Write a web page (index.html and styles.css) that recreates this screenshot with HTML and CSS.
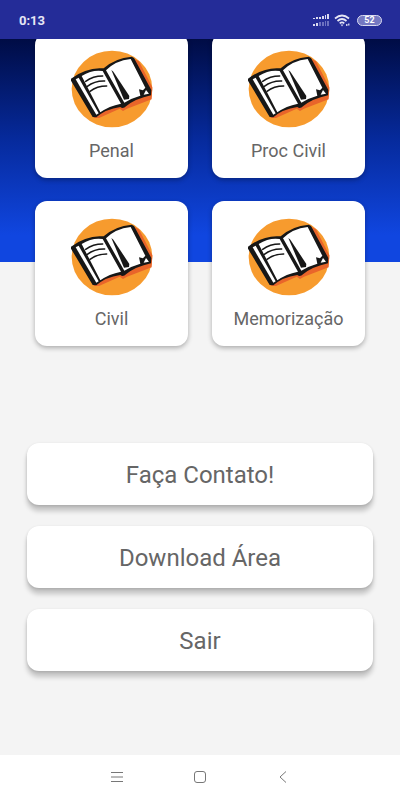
FILE: index.html
```html
<!DOCTYPE html>
<html lang="pt-BR">
<head>
    <meta charset="UTF-8">
    <meta name="viewport" content="width=device-width, initial-scale=1.0">
    <title>Menu</title>
    <link rel="stylesheet" href="styles.css">
</head>
<body>
    <svg class="sprite" aria-hidden="true">
        <symbol id="book" viewBox="32 30 246 234">
            <ellipse cx="155" cy="147" rx="121" ry="115" fill="#f79b2e"/>
            <path d="M218 54 L236 64 L276 142 L274 178 L200 206 L188 213 L178 206 L116 234 L100 234 Z" fill="#e9652a"/>
            <path d="M32 116 Q80 80 130 85 Q164 54 214 50 L221 54 L273 150 L272 166 Q226 176 198 198 Q188 208 180 201 Q136 207 108 232 L97 231 L32 122 Z" fill="#171717"/>
            <path d="M46 118 L55 113 L115 220 L108 224 Z" fill="#fff"/>
            <path d="M64 108 Q96 88 127 93 L182 191 Q146 198 120 217 Z" fill="#fff"/>
            <path d="M137 91 Q165 62 211 57 L255 143 L248 151 L236 148 L240 167 Q212 175 192 188 Z" fill="#fff"/>
            <path d="M153 90 L159 95 L207 168 L206 177 L191 179 Z" fill="#171717"/>
            <path d="M257 150 L266 161 L250 164 Z" fill="#fff"/>
            <path d="M76 124 Q98 108 127 108 M81 139 Q103 122 133 123 M89 154 Q110 138 139 138" fill="none" stroke="#171717" stroke-width="4.500" stroke-linecap="round"/>
        </symbol>
    </svg>

    <header class="status-bar">
        <span class="clock">0:13</span>
        <div class="status-icons">
            <svg class="signal" viewBox="0 0 16 13" aria-hidden="true">
                <path d="M0 4h2v1h-2z M3 3h2v2h-2z M6 3h2v2h-2z M9 2h2v3h-2z M12 1h1v4h-1z M14 0h2v5h-2z M0 10h2v2h-2z M3 9h2v3h-2z" fill="#d9daf0"/>
                <path d="M6 8h2v4h-2z M9 8h2v4h-2z M12 7h1v5h-1z M14 7h2v5h-2z" fill="#6d72c0"/>
            </svg>
            <svg class="wifi" viewBox="0 0 18 13" aria-hidden="true">
                <path d="M1 4.500 Q8 -1.500 15 4.500 M3.500 7 Q8 3 12.500 7 M5.700 9.300 Q8 7.300 10.300 9.300" fill="none" stroke="#e6e6f5" stroke-width="1.700"/>
                <path d="M6.500 10.500 h3 L8 12.500z M12 10h1.500v2h-1.500z M14 9.500h1.500v2h-1.500z" fill="#c8c9e8"/>
            </svg>
            <span class="battery">52</span>
        </div>
    </header>

    <main class="content">
        <nav class="cards">
            <a class="card" href="#penal">
                <svg class="card-icon" aria-hidden="true"><use href="#book"/></svg>
                <span>Penal</span>
            </a>
            <a class="card" href="#proc-civil">
                <svg class="card-icon" aria-hidden="true"><use href="#book"/></svg>
                <span>Proc Civil</span>
            </a>
            <a class="card" href="#civil">
                <svg class="card-icon" aria-hidden="true"><use href="#book"/></svg>
                <span>Civil</span>
            </a>
            <a class="card" href="#memorizacao">
                <svg class="card-icon" aria-hidden="true"><use href="#book"/></svg>
                <span>Memorização</span>
            </a>
        </nav>
        <div class="actions">
            <button class="button" type="button">Faça Contato!</button>
            <button class="button" type="button">Download Área</button>
            <button class="button" type="button">Sair</button>
        </div>
    </main>

    <footer class="nav-bar">
        <button class="nav-button" type="button" aria-label="Menu">
            <svg viewBox="0 0 14 14"><path d="M1 2.500h12M1 7h12M1 11.500h12"/></svg>
        </button>
        <button class="nav-button" type="button" aria-label="Início">
            <svg viewBox="0 0 14 14"><rect x="1.500" y="1.500" width="11" height="11" rx="2.500"/></svg>
        </button>
        <button class="nav-button" type="button" aria-label="Voltar">
            <svg viewBox="0 0 14 14"><path d="M10 1.500L4 7l6 5.500"/></svg>
        </button>
    </footer>
</body>
</html>
```
FILE: styles.css
```css
* {
    box-sizing: border-box;
}
body {
    display: flex;
    flex-direction: column;
    min-height: 100vh;
    margin: 0;
    background: #f4f4f4;
    font-family: Roboto, sans-serif;
    color: #666;
}
.sprite {
    display: none;
}
.status-bar {
    display: flex;
    justify-content: space-between;
    align-items: center;
    height: 39px;
    padding: 2px 18px 0 19px;
    background: #242c98;
    color: #e6e6f5;
}
.clock {
    font-size: 13px;
    font-weight: bold;
}
.status-icons {
    display: flex;
    align-items: center;
    gap: 5px;
}
.signal {
    width: 16px;
    height: 13px;
}
.wifi {
    width: 18px;
    height: 13px;
}
.battery {
    width: 25px;
    border: 1px solid #d9daf0;
    border-radius: 6px;
    background: #7478c2;
    color: white;
    font-size: 9px;
    font-weight: bold;
    line-height: 9px;
    text-align: center;
}
.content {
    flex: 1;
    overflow: hidden;
    background: linear-gradient(#000c45, #062a9c 45%, #1046e0 88%) no-repeat top / 100% 223px;
}
/* the list is scrolled a little under the status bar */
.cards {
    display: grid;
    grid-template-columns: 1fr 1fr;
    gap: 23px 24px;
    margin-top: -6px;
    padding: 0 35px;
}
.card {
    display: flex;
    flex-direction: column;
    align-items: center;
    gap: 11px;
    height: 145px;
    padding-top: 17px;
    background: white;
    border-radius: 12px;
    box-shadow: 0 2px 5px rgba(0,0,0,0.3);
    color: #666;
    font-size: 18px;
    line-height: 24px;
    text-decoration: none;
}
.card-icon {
    width: 82px;
    height: 78px;
}
.actions {
    display: flex;
    flex-direction: column;
    gap: 21px;
    padding: 97px 27px 0;
}
.button {
    height: 62px;
    padding: 2px 0 0;
    border: none;
    border-radius: 12px;
    background: white;
    box-shadow: 0 6px 5px rgba(0,0,0,0.2), 0 1px 3px rgba(0,0,0,0.15);
    color: #666;
    font-family: inherit;
    font-size: 24px;
    cursor: pointer;
}
.nav-bar {
    display: flex;
    justify-content: center;
    align-items: center;
    gap: 53px;
    height: 45px;
    background: white;
}
.nav-button {
    display: flex;
    justify-content: center;
    width: 30px;
    padding: 7px 8px 8px;
    border: none;
    background: none;
}
.nav-button svg {
    width: 14px;
    height: 14px;
    flex: none;
    fill: none;
    stroke: #777;
    stroke-width: 1;
}
```
